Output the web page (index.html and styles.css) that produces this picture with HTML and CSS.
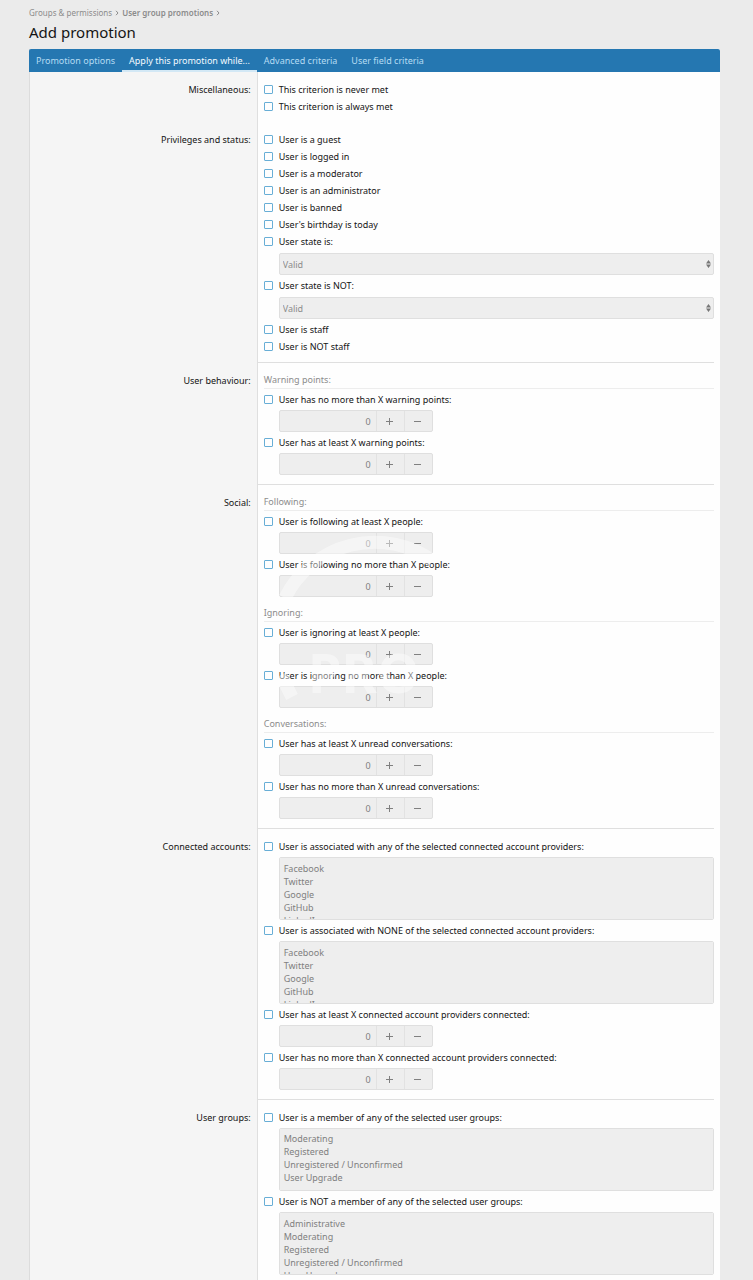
FILE: index.html
```html
<!DOCTYPE html>
<html lang="en">
<head>
    <meta charset="UTF-8">
    <meta name="viewport" content="width=device-width, initial-scale=1.0">
    <title>Add promotion</title>
    <link rel="stylesheet" href="styles.css">
</head>
<body>
    <div class="page">
        <nav class="breadcrumbs">
            <a href="#">Groups &amp; permissions</a>
            <svg class="chevron" viewBox="0 0 4 6"><path d="M1 .8 3 3 1 5.2"/></svg>
            <a href="#" class="current">User group promotions</a>
            <svg class="chevron" viewBox="0 0 4 6"><path d="M1 .8 3 3 1 5.2"/></svg>
        </nav>
        <h1 class="page-title">Add promotion</h1>

        <form class="block">
            <nav class="tabs">
                <a href="#" class="tab">Promotion options</a>
                <a href="#" class="tab active">Apply this promotion while...</a>
                <a href="#" class="tab">Advanced criteria</a>
                <a href="#" class="tab">User field criteria</a>
            </nav>

            <div class="form-row">
                <div class="row-label">Miscellaneous:</div>
                <div class="row-body no-line">
                    <label class="choice"><input type="checkbox"> This criterion is never met</label>
                    <label class="choice"><input type="checkbox"> This criterion is always met</label>
                </div>
            </div>

            <div class="form-row">
                <div class="row-label">Privileges and status:</div>
                <div class="row-body">
                    <label class="choice"><input type="checkbox"> User is a guest</label>
                    <label class="choice"><input type="checkbox"> User is logged in</label>
                    <label class="choice"><input type="checkbox"> User is a moderator</label>
                    <label class="choice"><input type="checkbox"> User is an administrator</label>
                    <label class="choice"><input type="checkbox"> User is banned</label>
                    <label class="choice"><input type="checkbox"> User's birthday is today</label>
                    <label class="choice"><input type="checkbox"> User state is:</label>
                    <div class="select-wrap">
                        <select class="select" aria-label="User state is" disabled><option>Valid</option></select>
                        <svg class="select-arrows" viewBox="0 0 5 8"><path d="M0 3.4 2.5 0 5 3.4zM0 4.6h5L2.5 8z"/></svg>
                    </div>
                    <label class="choice"><input type="checkbox"> User state is NOT:</label>
                    <div class="select-wrap">
                        <select class="select" aria-label="User state is NOT" disabled><option>Valid</option></select>
                        <svg class="select-arrows" viewBox="0 0 5 8"><path d="M0 3.4 2.5 0 5 3.4zM0 4.6h5L2.5 8z"/></svg>
                    </div>
                    <label class="choice"><input type="checkbox"> User is staff</label>
                    <label class="choice"><input type="checkbox"> User is NOT staff</label>
                </div>
            </div>

            <div class="form-row">
                <div class="row-label">User behaviour:</div>
                <div class="row-body">
                    <h2 class="group-title">Warning points:</h2>
                    <label class="choice"><input type="checkbox"> User has no more than X warning points:</label>
                    <div class="number-box">
                        <input type="number" value="0" aria-label="Maximum warning points" disabled>
                        <button type="button" class="plus" aria-label="Increase" disabled></button>
                        <button type="button" class="minus" aria-label="Decrease" disabled></button>
                    </div>
                    <label class="choice"><input type="checkbox"> User has at least X warning points:</label>
                    <div class="number-box">
                        <input type="number" value="0" aria-label="Minimum warning points" disabled>
                        <button type="button" class="plus" aria-label="Increase" disabled></button>
                        <button type="button" class="minus" aria-label="Decrease" disabled></button>
                    </div>
                </div>
            </div>

            <div class="form-row">
                <div class="row-label">Social:</div>
                <div class="row-body">
                    <svg class="watermark" viewBox="0 0 180 210" aria-hidden="true">
                        <path d="M21 99A100 100 0 0 1 169 62"/>
                        <path d="M17 176 28 198"/>
                        <text x="44" y="194">PRO</text>
                    </svg>
                    <h2 class="group-title">Following:</h2>
                    <label class="choice"><input type="checkbox"> User is following at least X people:</label>
                    <div class="number-box">
                        <input type="number" value="0" aria-label="Minimum following" disabled>
                        <button type="button" class="plus" aria-label="Increase" disabled></button>
                        <button type="button" class="minus" aria-label="Decrease" disabled></button>
                    </div>
                    <label class="choice"><input type="checkbox"> User is following no more than X people:</label>
                    <div class="number-box">
                        <input type="number" value="0" aria-label="Maximum following" disabled>
                        <button type="button" class="plus" aria-label="Increase" disabled></button>
                        <button type="button" class="minus" aria-label="Decrease" disabled></button>
                    </div>
                    <h2 class="group-title">Ignoring:</h2>
                    <label class="choice"><input type="checkbox"> User is ignoring at least X people:</label>
                    <div class="number-box">
                        <input type="number" value="0" aria-label="Minimum ignoring" disabled>
                        <button type="button" class="plus" aria-label="Increase" disabled></button>
                        <button type="button" class="minus" aria-label="Decrease" disabled></button>
                    </div>
                    <label class="choice"><input type="checkbox"> User is ignoring no more than X people:</label>
                    <div class="number-box">
                        <input type="number" value="0" aria-label="Maximum ignoring" disabled>
                        <button type="button" class="plus" aria-label="Increase" disabled></button>
                        <button type="button" class="minus" aria-label="Decrease" disabled></button>
                    </div>
                    <h2 class="group-title">Conversations:</h2>
                    <label class="choice"><input type="checkbox"> User has at least X unread conversations:</label>
                    <div class="number-box">
                        <input type="number" value="0" aria-label="Minimum unread conversations" disabled>
                        <button type="button" class="plus" aria-label="Increase" disabled></button>
                        <button type="button" class="minus" aria-label="Decrease" disabled></button>
                    </div>
                    <label class="choice"><input type="checkbox"> User has no more than X unread conversations:</label>
                    <div class="number-box">
                        <input type="number" value="0" aria-label="Maximum unread conversations" disabled>
                        <button type="button" class="plus" aria-label="Increase" disabled></button>
                        <button type="button" class="minus" aria-label="Decrease" disabled></button>
                    </div>
                </div>
            </div>

            <div class="form-row">
                <div class="row-label">Connected accounts:</div>
                <div class="row-body">
                    <label class="choice"><input type="checkbox"> User is associated with any of the selected connected account providers:</label>
                    <select class="listbox" size="4" multiple aria-label="Any of these providers" disabled>
                        <option>Facebook</option>
                        <option>Twitter</option>
                        <option>Google</option>
                        <option>GitHub</option>
                        <option>LinkedIn</option>
                    </select>
                    <label class="choice"><input type="checkbox"> User is associated with NONE of the selected connected account providers:</label>
                    <select class="listbox" size="4" multiple aria-label="None of these providers" disabled>
                        <option>Facebook</option>
                        <option>Twitter</option>
                        <option>Google</option>
                        <option>GitHub</option>
                        <option>LinkedIn</option>
                    </select>
                    <label class="choice"><input type="checkbox"> User has at least X connected account providers connected:</label>
                    <div class="number-box">
                        <input type="number" value="0" aria-label="Minimum connected providers" disabled>
                        <button type="button" class="plus" aria-label="Increase" disabled></button>
                        <button type="button" class="minus" aria-label="Decrease" disabled></button>
                    </div>
                    <label class="choice"><input type="checkbox"> User has no more than X connected account providers connected:</label>
                    <div class="number-box">
                        <input type="number" value="0" aria-label="Maximum connected providers" disabled>
                        <button type="button" class="plus" aria-label="Increase" disabled></button>
                        <button type="button" class="minus" aria-label="Decrease" disabled></button>
                    </div>
                </div>
            </div>

            <div class="form-row">
                <div class="row-label">User groups:</div>
                <div class="row-body last">
                    <label class="choice"><input type="checkbox"> User is a member of any of the selected user groups:</label>
                    <select class="listbox" id="member-groups" size="4" multiple aria-label="Member of these groups" disabled>
                        <option>Administrative</option>
                        <option>Moderating</option>
                        <option>Registered</option>
                        <option>Unregistered / Unconfirmed</option>
                        <option>User Upgrade</option>
                    </select>
                    <label class="choice"><input type="checkbox"> User is NOT a member of any of the selected user groups:</label>
                    <select class="listbox" size="4" multiple aria-label="Not a member of these groups" disabled>
                        <option>Administrative</option>
                        <option>Moderating</option>
                        <option>Registered</option>
                        <option>Unregistered / Unconfirmed</option>
                        <option>User Upgrade</option>
                    </select>
                </div>
            </div>
        </form>
    </div>

    <script>
        document.getElementById('member-groups').scrollTop = 14;
    </script>
</body>
</html>
```
FILE: styles.css
```css
* {
    margin: 0;
    padding: 0;
    box-sizing: border-box;
}

body {
    font-family: 'Noto Sans', 'Open Sans', sans-serif;
    font-size: 9px;
    line-height: 17px;
    background: #ebebeb;
    color: #141414;
}

input,
select,
button {
    font: inherit;
}

a {
    color: inherit;
    text-decoration: none;
}

.page {
    padding: 5px 33px 0 29px;
}

.breadcrumbs {
    display: flex;
    align-items: center;
    gap: 3px;
    font-size: 8px;
    line-height: 16px;
    color: #8c8c8c;
}

.breadcrumbs .current {
    font-weight: 600;
}

.chevron {
    width: 4px;
    height: 6px;
    fill: none;
    stroke: #8c8c8c;
}

.page-title {
    font-size: 15px;
    font-weight: 400;
    line-height: 22px;
    padding-bottom: 6px;
}

.block {
    border-left: 1px solid #dcdcdc;
    background: #fefefe;
}

.tabs {
    display: flex;
    height: 23px;
    margin-left: -1px;
    background: #2577b1;
    color: #b5dcf3;
    border-radius: 2px 2px 0 0;
}

.tab {
    padding: 3px 7px 0;
    border-bottom: 2px solid transparent;
}

.tab.active {
    color: #f4faff;
    border-bottom-color: #d3e8f5;
}

.form-row {
    display: grid;
    grid-template-columns: 33% 1fr;
}

.row-label {
    padding: 9px 6px 7px;
    text-align: right;
    background: #f5f5f5;
    border-right: 1px solid #dfdfdf;
}

.row-body {
    position: relative;
    margin-right: 6px;
    padding: 9px 0 7px 6px;
    border-bottom: 1px solid #dfdfdf;
}

.row-body.no-line {
    border-bottom: 0;
}

.row-body.last {
    padding-bottom: 4px;
    border-bottom: 0;
}

.group-title {
    margin: 8px 0 2px;
    font-size: 9px;
    font-weight: 400;
    line-height: 16px;
    color: #8c8c8c;
    border-bottom: 1px solid #ededed;
}

.group-title:first-of-type {
    margin-top: 0;
}

.choice {
    display: flex;
    align-items: center;
    gap: 6px;
}

.choice input {
    appearance: none;
    width: 9px;
    height: 9px;
    border: 1px solid #68aed6;
    border-radius: 1px;
    background: #fefefe;
}

.select-wrap {
    position: relative;
    margin: 3px 0 2px 15px;
}

.select {
    appearance: none;
    display: block;
    width: 100%;
    height: 22px;
    padding: 0 3px;
    border: 1px solid #dfdfdf;
    border-radius: 2px;
    background: #eee;
    color: #8c8c8c;
    opacity: 1;
}

.select-arrows {
    position: absolute;
    top: 7px;
    right: 3px;
    width: 5px;
    height: 8px;
    fill: #777;
}

.number-box {
    display: flex;
    width: 154px;
    height: 22px;
    margin: 2px 0 2px 15px;
    border: 1px solid #dfdfdf;
    border-radius: 2px;
    background: #eee;
}

.number-box input {
    appearance: textfield;
    flex: 1;
    min-width: 0;
    padding: 0 5px;
    border: 0;
    background: none;
    color: #808080;
    text-align: right;
}

.number-box input::-webkit-inner-spin-button {
    display: none;
}

.number-box button {
    display: grid;
    place-items: center;
    width: 28px;
    padding-right: 2px;
    border: 0;
    border-left: 1px solid #e2e2e2;
    background: none;
}

/* both bars share one grid cell, so the plus is a centred cross */
.number-box button::before,
.plus::after {
    content: '';
    grid-area: 1 / 1;
    width: 7px;
    height: 1px;
    background: #808080;
}

.plus::after {
    width: 1px;
    height: 7px;
}

.listbox {
    appearance: none;
    display: block;
    width: calc(100% - 15px);
    height: 63px;
    margin: 2px 0 2px 15px;
    padding: 4px 4px 6px;
    border: 1px solid #dfdfdf;
    border-radius: 2px;
    background: #eee;
    color: #808080;
    opacity: 1;
    overflow-y: auto;
    scrollbar-width: none;
}

.listbox option {
    min-height: 13px;
    height: 13px;
    padding: 0;
    line-height: 13px;
    color: #808080;
}

/* faint stamp lying over the fields */
.watermark {
    position: absolute;
    top: 14px;
    left: 6px;
    z-index: 1;
    width: 180px;
    height: 210px;
    pointer-events: none;
    opacity: 0.45;
}

.watermark path {
    fill: none;
    stroke: #fff;
    stroke-width: 13px;
}

.watermark text {
    font-size: 54px;
    font-weight: 700;
    fill: #fff;
}
```
